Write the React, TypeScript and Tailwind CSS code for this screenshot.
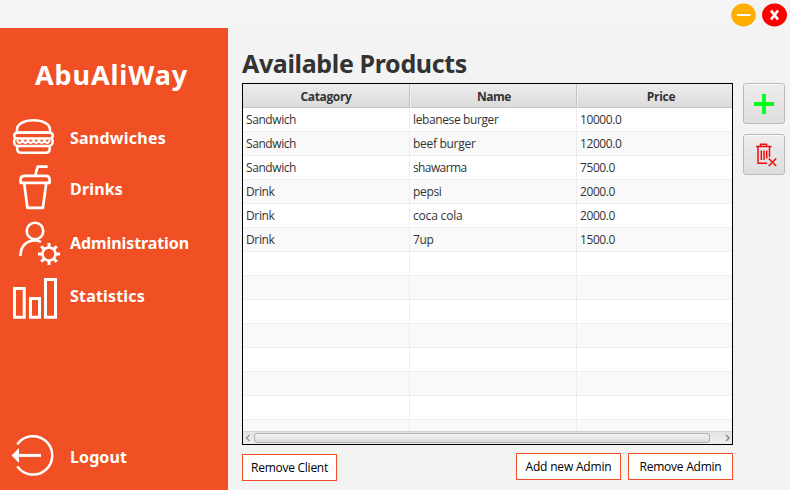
import React from "react";

const TITLE = "font-['Noto_Sans','Open_Sans',sans-serif] font-bold";

const products = [
  ["Sandwich", "lebanese burger", "10000.0"],
  ["Sandwich", "beef burger", "12000.0"],
  ["Sandwich", "shawarma", "7500.0"],
  ["Drink", "pepsi", "2000.0"],
  ["Drink", "coca cola", "2000.0"],
  ["Drink", "7up", "1500.0"],
];
const rows = [...products, ...Array.from({ length: 8 }, () => ["", "", ""])];

const svgProps = { fill: "none", stroke: "white", className: "block shrink-0" };

function BurgerIcon() {
  return (
    <svg {...svgProps} width="60" height="50" strokeWidth="2.500" strokeLinejoin="round">
      <path d="M17 20.500v-3C17 12 24 8.300 33.500 8.300S50 12 50 17.500v3z" />
      <rect x="14.300" y="20.800" width="38.400" height="5.700" rx="2.800" />
      <path d="M14.800 27c-1.800 3-.3 7 3 7h31c3.500 0 5-4 3.300-7M17.200 34v3q0 3.700 4 3.700h24.500q4 0 4-3.700v-3" />
      <path d="M17 28q2.700 6 5.500 0 2.700 6 5.500 0 2.700 6 5.500 0 2.700 6 5.500 0 2.700 6 5.500 0 2.700 6 5.500 0" strokeWidth="2" />
    </svg>
  );
}

function DrinkIcon() {
  return (
    <svg {...svgProps} width="60" height="50" strokeWidth="2.700" strokeLinejoin="round">
      <path d="M35.300 12l2.400-8.300h10" />
      <path d="M20.600 19.800v-3q0-4 4-4h21q4 0 4 4v3z" />
      <path d="M24.200 20.500l3.200 24.300h15.500l3.300-24.300" />
    </svg>
  );
}

function AdminIcon() {
  return (
    <svg {...svgProps} width="64" height="50" strokeWidth="2.600">
      <circle cx="35" cy="13" r="8.300" />
      <path d="M20.500 38c0-10 6-15.500 14.500-15.500 2.500 0 4.500.5 6 1.500" />
      <circle cx="49" cy="36" r="6.500" />
      <path strokeWidth="3" d="M49 29.500v-4.500M49 42.500V47M42.500 36H38M55.500 36H60M44.400 31.400l-3.200-3.200M53.600 31.400l3.200-3.200M44.400 40.600l-3.200 3.200M53.600 40.600l3.200 3.200" />
    </svg>
  );
}

function StatsIcon() {
  return (
    <svg {...svgProps} width="60" height="46" strokeWidth="3">
      <path d="M14.500 11.500h9.700v28.700h-9.700zM30.500 21.500h9v18.700h-9zM45.500 2.500h10v37.700h-10z" />
    </svg>
  );
}

function LogoutIcon() {
  return (
    <svg {...svgProps} width="60" height="46" strokeWidth="2.500">
      <path d="M17.300 12.400a19.200 19.200 0 1 1 0 22" />
      <path d="M18 23.400h23" strokeWidth="3" />
      <path d="M11.600 23.400L19 16v15z" fill="white" stroke="none" />
    </svg>
  );
}

function MenuItem({ icon, label, className, width, pad }: { icon: React.ReactNode; label: string; className: string; width: number; pad: string }) {
  return (
    <div className={`flex ${className}`}>
      <div className="w-[70px] shrink-0">{icon}</div>
      <Fit width={width} className={`${TITLE} text-[16px] leading-5 ${pad}`}>{label}</Fit>
    </div>
  );
}

/* Keeps a label at a fixed measure by spreading its tracking. */
function Fit({ width, className, children }: { width: number; className: string; children: string }) {
  const ref = React.useRef<HTMLSpanElement>(null);
  React.useLayoutEffect(() => {
    const el = ref.current;
    if (!el) return;
    el.style.letterSpacing = "0px";
    const natural = el.getBoundingClientRect().width;
    el.style.letterSpacing = `${(width - natural) / children.length}px`;
  }, [width, children]);
  return (
    <div className={className}>
      <span ref={ref} className="inline-block whitespace-nowrap">{children}</span>
    </div>
  );
}

const cellWidths: Record<string, number> = {
  Sandwich: 50, "lebanese burger": 85.5, "beef burger": 62.500, shawarma: 53.500, Drink: 28.500, pepsi: 28.500,
  "coca cola": 49.500, "7up": 20.500, "10000.0": 41.500, "12000.0": 41.500, "7500.0": 35, "2000.0": 35, "1500.0": 35,
};

function OutlineButton({ label, width, className }: { label: string; width: number; className: string }) {
  return (
    <button className={`flex h-[27px] items-center justify-center border border-[#f04e24] bg-white text-[12px] text-black ${className}`}>
      <Fit width={width} className="leading-4">{label}</Fit>
    </button>
  );
}

const toolButton = "flex h-[41px] w-[42px] items-center justify-center rounded-[3px] border border-[#bababa] bg-linear-to-b from-[#ededed] to-[#dedede] shadow-[inset_0_1px_0_#fafafa]";

export default function App() {
  return (
    <div className="flex h-[490px] w-[790px] flex-col overflow-hidden bg-[#f3f3f3] font-['Open_Sans','Noto_Sans',sans-serif] text-[12px] text-[#333]">
      <header className="flex h-7 shrink-0 justify-end gap-[6px] bg-[#f4f4f4] pt-[2px] pr-[3px]">
        <button aria-label="Minimize">
          <svg width="25" height="24" className="block"><ellipse cx="12.500" cy="12" rx="12.300" ry="11.400" fill="#ffae00" /><path d="M6 12h13.500" stroke="#fff" strokeWidth="2" /></svg>
        </button>
        <button aria-label="Close">
          <svg width="25" height="24" className="block"><ellipse cx="12.500" cy="12" rx="12.500" ry="11.400" fill="#ff0000" /><path d="M9 7.500l7 9M16 7.500l-7 9" stroke="#fff" strokeWidth="2.800" /></svg>
        </button>
      </header>
      <div className="flex min-h-0 flex-1">
        <aside className="flex w-[228px] shrink-0 flex-col bg-[#f15025] text-white">
          <Fit width={153} className={`${TITLE} mt-[30px] ml-[35px] h-[34px] text-[27px] leading-[34px]`}>AbuAliWay</Fit>
          <MenuItem icon={<BurgerIcon />} label="Sandwiches" width={96} className="mt-[20px] h-[50px]" pad="pt-[16px]" />
          <MenuItem icon={<DrinkIcon />} label="Drinks" width={53} className="mt-[1px] h-[50px]" pad="pt-[16px]" />
          <MenuItem icon={<AdminIcon />} label="Administration" width={119} className="mt-[5px] h-[50px]" pad="pt-[15px]" />
          <MenuItem icon={<StatsIcon />} label="Statistics" width={75} className="mt-[9px] h-[46px]" pad="pt-[9px]" />
          <MenuItem icon={<LogoutIcon />} label="Logout" width={57} className="mt-auto mb-[12px] h-[46px]" pad="pt-[15px]" />
        </aside>
        <main className="ml-[14px] w-[491px] shrink-0 pt-[18px]">
          <h1><Fit width={225} className={`${TITLE} h-[37px] text-[25px] leading-[34px]`}>Available Products</Fit></h1>
          <section className="flex h-[362px] flex-col border border-black bg-white">
            <div className="grid h-6 shrink-0 grid-cols-[167px_167px_1fr] border-b border-[#c5c5c5] bg-linear-to-b from-[#ededed] to-[#dbdbdb] text-center font-bold">
              <div className="flex justify-center border-r border-[#c5c5c5]"><Fit width={51} className="leading-[25px]">Catagory</Fit></div>
              <div className="flex justify-center border-r border-[#c5c5c5] pl-[2px] shadow-[inset_1px_0_0_#f0f0f0]"><Fit width={34} className="leading-[25px]">Name</Fit></div>
              <div className="flex justify-center pl-[13px] shadow-[inset_1px_0_0_#f0f0f0]"><Fit width={28.5} className="leading-[25px]">Price</Fit></div>
            </div>
            <div className="min-h-0 flex-1 overflow-hidden">
              {rows.map((row, i) => (
                <div key={i} className={`grid h-6 grid-cols-[167px_167px_1fr] border-b border-[#ededed] ${i % 2 ? "bg-[#f9f9f9]" : "bg-white"}`}>
                  {row.map((value, j) => (
                    <div key={j} className={`pl-[3px] ${j < 2 ? "border-r border-[#ededed]" : ""}`}>
                      {value && <Fit width={cellWidths[value]} className="leading-[24px]">{value}</Fit>}
                    </div>
                  ))}
                </div>
              ))}
            </div>
            <div className="flex h-[13px] shrink-0 items-center border-t border-[#d4d4d4] bg-linear-to-b from-[#e2e2e2] to-[#efefef] px-[2px]">
              <svg width="9" height="10" fill="none" stroke="#969696" strokeWidth="1.400"><path d="M4.500 2L1.500 5l3 3" /></svg>
              <div className="h-[10px] w-[456px] rounded-[3px] border border-[#b0b0b0] bg-linear-to-b from-[#f3f3f3] to-[#dcdcdc]" />
              <svg width="7" height="10" className="ml-auto" fill="none" stroke="#858585" strokeWidth="1.400"><path d="M3 2l3 3-3 3" /></svg>
            </div>
          </section>
          <footer className="flex gap-[7px] pt-[8px]">
            <OutlineButton label="Remove Client" width={77} className="mt-px mr-auto w-[95px]" />
            <OutlineButton label="Add new Admin" width={86} className="w-[105px]" />
            <OutlineButton label="Remove Admin" width={82} className="w-[105px]" />
          </footer>
        </main>
        <div className="ml-[10px] flex flex-col gap-[10px] pt-[55px]">
          <button className={toolButton} aria-label="Add product">
            <svg width="22" height="22" className="block"><path d="M1 11h20M11 1v20" stroke="#00ff19" strokeWidth="3.800" /></svg>
          </button>
          <button className={toolButton} aria-label="Delete product">
            <svg width="26" height="27" className="block" fill="none" stroke="#f00d0d" strokeWidth="1.500">
              <path d="M5 5.500h15.500M9.500 5.500V3.200h6v2.300M7 5.500v16.700h9M18.500 5.500v10.500M10.300 9.500v9.500M13 9.500v9.500M15.700 9.500v8" />
              <path d="M17.700 17.500l7.500 7.500M25.200 17.500l-7.500 7.500" strokeWidth="1.600" />
            </svg>
          </button>
        </div>
      </div>
    </div>
  );
}
